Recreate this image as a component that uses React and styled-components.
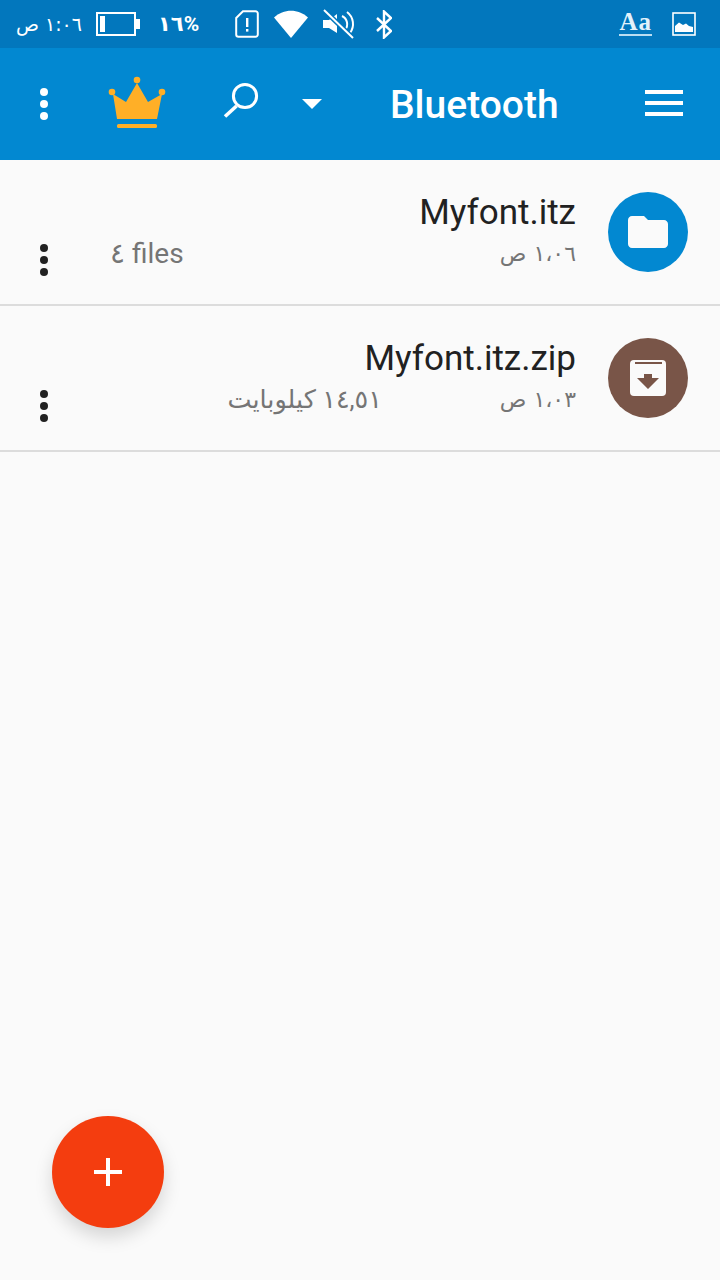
import styled, { createGlobalStyle } from "styled-components"

const Global = createGlobalStyle`
    html, body{
        margin:0;
        padding:0;
        background-color:#FAFAFA;
    }
`

function Kebab({ color }){
    return(
        <KebabBox>
            <Dot $color={color} />
            <Dot $color={color} />
            <Dot $color={color} />
        </KebabBox>
    )
}

function StatusBar(){
    return(
        <Status>
            <ClockText dir="rtl">١:٠٦ ص</ClockText>
            <StatusIcon $left={14} width="44" height="24" viewBox="0 0 44 24">
                <rect x="1" y="1" width="38" height="22" fill="none" stroke="#fff" strokeWidth="2" />
                <rect x="4" y="4" width="5" height="16" fill="#fff" />
                <rect x="40" y="7" width="4" height="10" fill="#fff" />
            </StatusIcon>
            <Percent>١٦%</Percent>
            <StatusIcon $left={36} width="24" height="28" viewBox="0 0 24 28">
                <path d="M8 1.2H20.5a2.3 2.3 0 0 1 2.3 2.3V24.5a2.3 2.3 0 0 1-2.3 2.3H3.5a2.3 2.3 0 0 1-2.3-2.3V8z" fill="none" stroke="#fff" strokeWidth="2" />
                <rect x="11" y="8" width="2.4" height="9" fill="#fff" />
                <rect x="11" y="19" width="2.4" height="2.6" fill="#fff" />
            </StatusIcon>
            <StatusIcon $left={15} width="34" height="28" viewBox="0 0 34 28">
                <path d="M0 7.5C9.5-1.5 24.5-1.5 34 7.5L17 28z" fill="#fff" />
            </StatusIcon>
            <StatusIcon $left={15} width="32" height="30" viewBox="0 0 32 30">
                <path d="M0 11H6L14 5V24L6 19H0z" fill="#fff" />
                <path d="M19 7a9 9 0 0 1 3 14M24 3a15 15 0 0 1 3 21" fill="none" stroke="#fff" strokeWidth="2" />
                <path d="M1 1L30 29" stroke="#0277BD" strokeWidth="5" />
                <path d="M1 1L30 29" stroke="#fff" strokeWidth="2" />
            </StatusIcon>
            <StatusIcon $left={21} width="16" height="29" viewBox="0 0 16 29">
                <path d="M1 8L15 21L8 27.5V1.5L15 8L1 21" fill="none" stroke="#fff" strokeWidth="2.4" />
            </StatusIcon>
            <Spacer />
            <FontBadge>Aa</FontBadge>
            <StatusIcon $left={20} width="24" height="24" viewBox="0 0 24 24">
                <rect x="1" y="1" width="22" height="22" fill="none" stroke="#fff" strokeWidth="1.6" />
                <path d="M3 20V14L7 10.5L11 13L14 11.5L17 14L21 15V20z" fill="#fff" />
            </StatusIcon>
        </Status>
    )
}

function Toolbar(){
    return(
        <Bar>
            <KebabSlot>
                <Kebab color="#FFFFFF" />
            </KebabSlot>
            <Crown width="60" height="54" viewBox="108 76 60 54">
                <path d="M113 94L126 102L137 83L148 102L162 94L157 119H117z" fill="#FFAF27" />
                <circle cx="112" cy="92" r="3.3" fill="#FFAF27" />
                <circle cx="137" cy="80" r="3.3" fill="#FFAF27" />
                <circle cx="162" cy="92" r="3.3" fill="#FFAF27" />
                <rect x="117" y="124" width="40" height="4" rx="1.5" fill="#FFAF27" />
            </Crown>
            <Search width="38" height="38" viewBox="223 84 38 38">
                <circle cx="245" cy="99" r="11.6" fill="none" stroke="#fff" strokeWidth="3" />
                <path d="M236.5 109L225 119.5" stroke="#fff" strokeWidth="3.6" />
            </Search>
            <Caret width="20" height="10" viewBox="0 0 20 10">
                <path d="M0 0H20L10 10z" fill="#fff" />
            </Caret>
            <BarTitle>Bluetooth</BarTitle>
            <Burger>
                <BurgerLine />
                <BurgerLine />
                <BurgerLine />
            </Burger>
        </Bar>
    )
}

function FileRow({ name, time, size, sizeDir, sizeAlign, sizeFont, children, color }){
    return(
        <Row>
            <KebabSlot>
                <Kebab color="#212121" />
            </KebabSlot>
            <RowBody>
                <FileName>{name}</FileName>
                <MetaLine>
                    <SizeText dir={sizeDir} $align={sizeAlign} $font={sizeFont}>{size}</SizeText>
                    <TimeText dir="rtl">{time}</TimeText>
                </MetaLine>
            </RowBody>
            <Avatar $color={color}>{children}</Avatar>
        </Row>
    )
}

export default function App(){
    return(
        <Page>
            <Global />
            <StatusBar />
            <Toolbar />
            <FileRow name="Myfont.itz" time="١،٠٦ ص" size="٤ files" sizeDir="ltr" sizeAlign="left" sizeFont={28} color="#0288D1">
                <svg width="48" height="48" viewBox="0 0 24 24">
                    <path d="M10 4H4c-1.1 0-2 .9-2 2v12c0 1.1.9 2 2 2h16c1.1 0 2-.9 2-2V8c0-1.1-.9-2-2-2h-8l-2-2z" fill="#FAFAFA" />
                </svg>
            </FileRow>
            <FileRow name="Myfont.itz.zip" time="١،٠٣ ص" size="١٤,٥١ كيلوبايت" sizeDir="rtl" sizeAlign="right" sizeFont={25.5} color="#795548">
                <svg width="36" height="36" viewBox="0 0 36 36">
                    <rect width="36" height="36" rx="4" fill="#FAFAFA" />
                    <rect x="5" y="2" width="27" height="2" fill="#795548" />
                    <path d="M14 14H22V18H29L18 29L7 18H14z" fill="#795548" />
                </svg>
            </FileRow>
            <Fab>
                <svg width="28" height="28" viewBox="0 0 28 28">
                    <path d="M12 0H16V12H28V16H16V28H12V16H0V12H12z" fill="#fff" />
                </svg>
            </Fab>
        </Page>
    )
}

const Page = styled.div`
    width:720px;
    height:1280px;
    position:relative;
    overflow:hidden;
    background-color:#FAFAFA;
    font-family:"Roboto", "DejaVu Sans", sans-serif;
`
const Status = styled.div`
    height:48px;
    display:flex;
    align-items:center;
    padding:0 24px 0 16px;
    box-sizing:border-box;
    background-color:#0277BD;
    color:#FFFFFF;
`
const ClockText = styled.span`
    width:66px;
    font-family:"DejaVu Sans", sans-serif;
    font-size:19px;
    white-space:nowrap;
`
const StatusIcon = styled.svg`
    flex:none;
    margin-left:${p => p.$left}px;
`
const Percent = styled.span`
    width:40px;
    margin-left:18px;
    margin-right:1px;
    font-family:"Roboto", "DejaVu Sans", sans-serif;
    font-size:21px;
    font-weight:700;
    letter-spacing:-1px;
    white-space:nowrap;
`
const Spacer = styled.div`
    flex:1;
`
const FontBadge = styled.span`
    margin-top:-3px;
    font-family:"Liberation Serif", serif;
    font-size:25px;
    font-weight:700;
    line-height:25px;
    letter-spacing:1px;
    border-bottom:2px solid #B9DDF2;
    color:#E3F2FB;
`
const Bar = styled.div`
    height:112px;
    display:flex;
    align-items:center;
    background-color:#0288D1;
`
const KebabSlot = styled.div`
    flex:none;
    width:48px;
    padding-left:40px;
    box-sizing:border-box;
`
const KebabBox = styled.div`
    width:8px;
    display:flex;
    flex-direction:column;
    gap:4px;
`
const Dot = styled.span`
    width:8px;
    height:8px;
    border-radius:50%;
    background-color:${p => p.$color};
`
const Crown = styled.svg`
    flex:none;
    margin-left:60px;
    margin-top:-2px;
`
const Search = styled.svg`
    flex:none;
    margin-left:55px;
    margin-top:-9px;
`
const Caret = styled.svg`
    flex:none;
    margin-left:41px;
    margin-top:-1px;
`
const BarTitle = styled.div`
    margin-left:68px;
    margin-top:1px;
    color:#FFFFFF;
    font-size:39px;
    font-weight:500;
    white-space:nowrap;
`
const Burger = styled.div`
    margin-left:auto;
    margin-right:37px;
    width:38px;
    display:flex;
    flex-direction:column;
    gap:7px;
    margin-top:-2px;
`
const BurgerLine = styled.span`
    height:4px;
    background-color:#FFFFFF;
`
const Row = styled.div`
    height:146px;
    display:flex;
    align-items:flex-start;
    box-sizing:border-box;
    border-bottom:2px solid #DCDCDC;
    ${KebabSlot}{
        margin-top:84px;
    }
`
const RowBody = styled.div`
    flex:1;
    display:flex;
    flex-direction:column;
    padding:31px 0 0 62px;
`
const FileName = styled.div`
    color:#212121;
    font-size:35px;
    line-height:44px;
    text-align:right;
    white-space:nowrap;
`
const MetaLine = styled.div`
    display:flex;
    justify-content:space-between;
    align-items:center;
    height:36px;
`
const SizeText = styled.span`
    width:272px;
    color:#757575;
    font-size:${p => p.$font}px;
    text-align:${p => p.$align};
    white-space:nowrap;
    font-family:"Roboto", "DejaVu Sans", sans-serif;
`
const TimeText = styled.span`
    color:#757575;
    font-size:22px;
    font-family:"DejaVu Sans", sans-serif;
    white-space:nowrap;
`
const Avatar = styled.div`
    flex:none;
    width:80px;
    height:80px;
    margin:32px 32px 0;
    border-radius:50%;
    display:flex;
    align-items:center;
    justify-content:center;
    background-color:${p => p.$color};
`
const Fab = styled.button`
    position:absolute;
    left:52px;
    top:1116px;
    width:112px;
    height:112px;
    padding:0;
    border:none;
    border-radius:50%;
    display:flex;
    align-items:center;
    justify-content:center;
    background-color:#F43D0F;
    box-shadow:0 9px 18px rgba(0,0,0,0.15);
`
